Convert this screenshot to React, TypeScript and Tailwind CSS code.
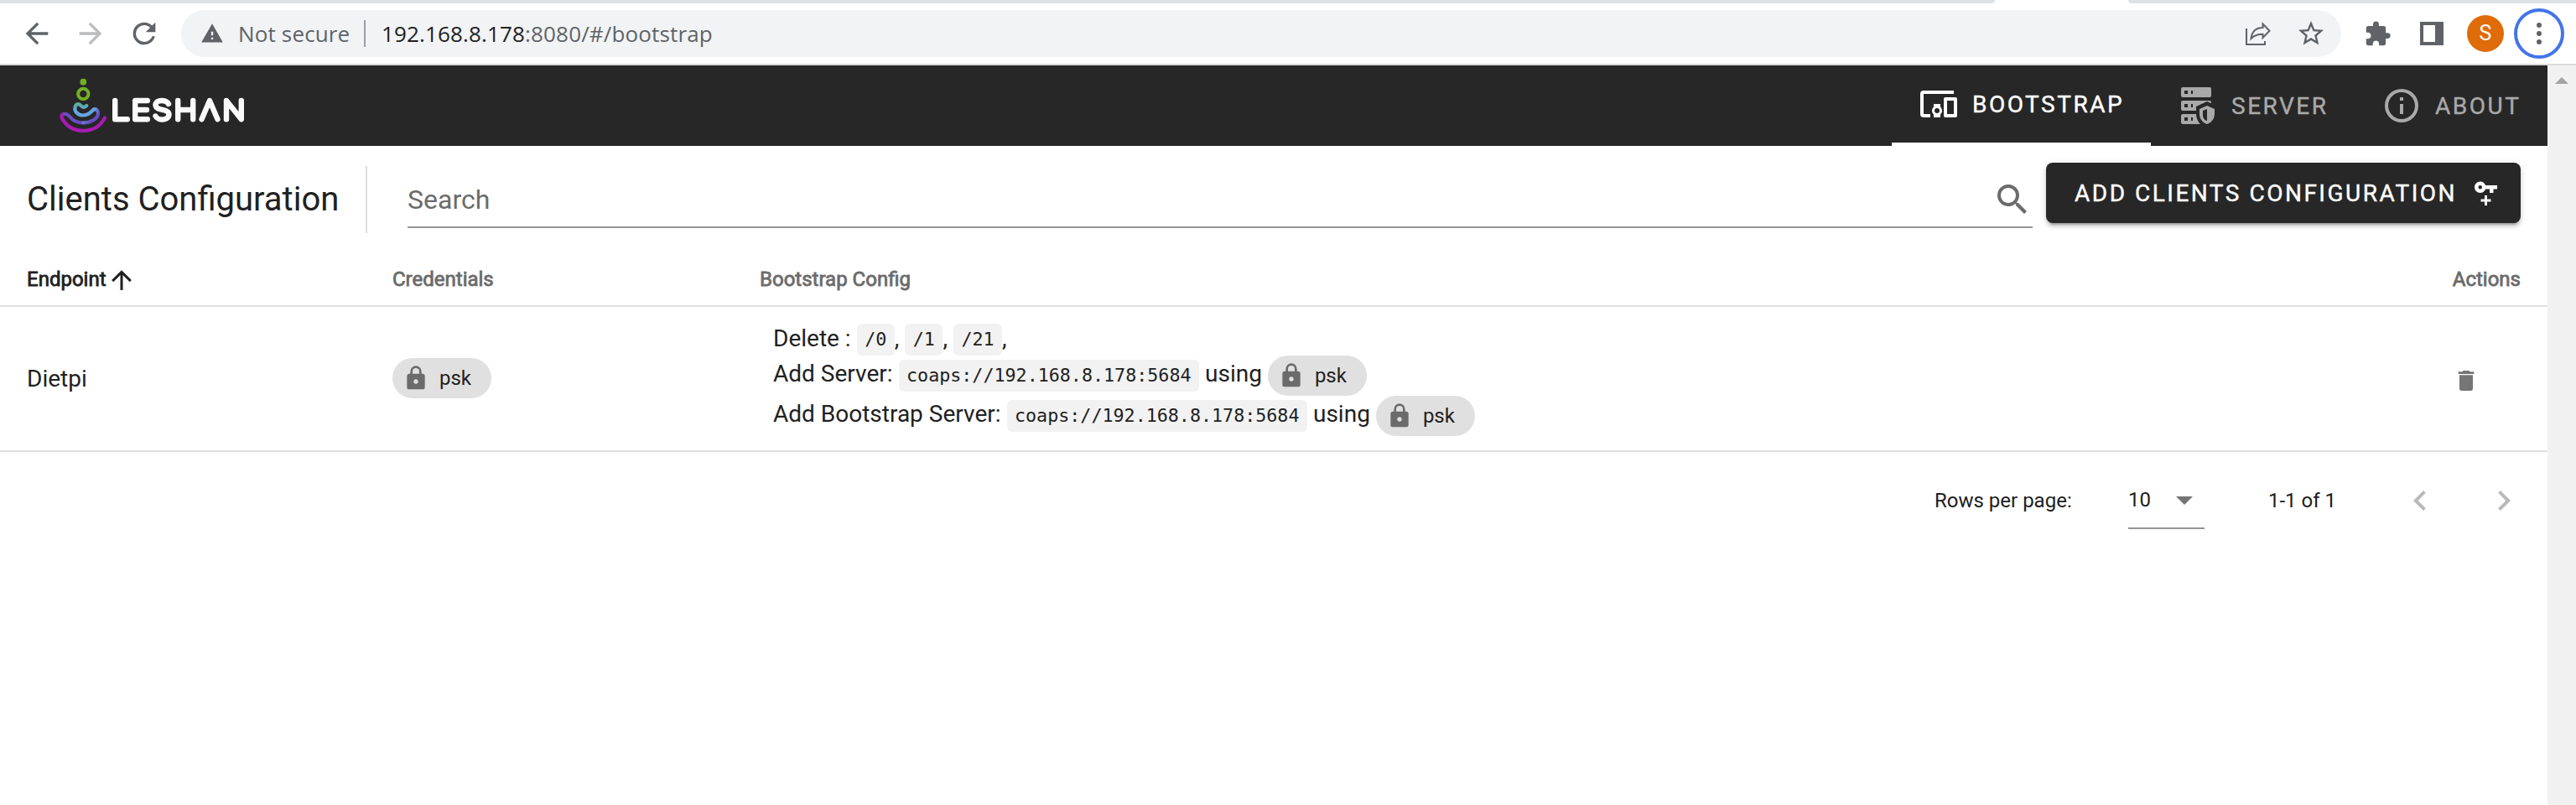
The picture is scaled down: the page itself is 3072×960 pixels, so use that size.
import React from "react";

const ICONS = {
  devices:
    "M3,6H21V4H3A2,2 0 0,0 1,6V18A2,2 0 0,0 3,20H7V18H3V6M13,12H9V13.78C8.39,14.33 8,15.11 8,16C8,16.89 8.39,17.67 9,18.22V20H13V18.22C13.61,17.67 14,16.88 14,16C14,15.12 13.61,14.33 13,13.78V12M11,17.5A1.5,1.5 0 0,1 9.5,16A1.5,1.5 0 0,1 11,14.5A1.5,1.5 0 0,1 12.5,16A1.5,1.5 0 0,1 11,17.5M22,8H16A1,1 0 0,0 15,9V19A1,1 0 0,0 16,20H22A1,1 0 0,0 23,19V9A1,1 0 0,0 22,8M21,18H17V10H21V18Z",
  server:
    "M3,1H19A1,1 0 0,1 20,2V6A1,1 0 0,1 19,7H3A1,1 0 0,1 2,6V2A1,1 0 0,1 3,1M3,9H19A1,1 0 0,1 20,10V10.67L17.5,9.56L11,12.44V15H3A1,1 0 0,1 2,14V10A1,1 0 0,1 3,9M3,17H11C11.06,19.25 12,21.4 13.46,23H3A1,1 0 0,1 2,22V18A1,1 0 0,1 3,17M8,5H9V3H8V5M8,13H9V11H8V13M8,21H9V19H8V21M4,3V5H6V3H4M4,11V13H6V11H4M4,19V21H6V19H4M17.5,12L22,14V17C22,19.78 20.08,22.37 17.5,23C14.92,22.37 13,19.78 13,17V14L17.5,12M17.5,13.94L15,15.06V17.72C15,19.26 16.07,20.7 17.5,21.06V13.94Z",
  info: "M11,9H13V7H11M12,20C7.59,20 4,16.41 4,12C4,7.59 7.59,4 12,4C16.41,4 20,7.59 20,12C20,16.41 16.41,20 12,20M12,2A10,10 0 0,0 2,12A10,10 0 0,0 12,22A10,10 0 0,0 22,12A10,10 0 0,0 12,2M11,17H13V11H11V17Z",
  magnify:
    "M9.5,3A6.5,6.5 0 0,1 16,9.5C16,11.11 15.41,12.59 14.44,13.73L14.71,14H15.5L20.5,19L19,20.5L14,15.5V14.71L13.73,14.44C12.59,15.41 11.11,16 9.5,16A6.5,6.5 0 0,1 3,9.5A6.5,6.5 0 0,1 9.5,3M9.5,5C7,5 5,7 5,9.5C5,12 7,14 9.5,14C12,14 14,12 14,9.5C14,7 12,5 9.5,5Z",
  lock: "M12,17A2,2 0 0,0 14,15C14,13.89 13.1,13 12,13A2,2 0 0,0 10,15A2,2 0 0,0 12,17M18,8A2,2 0 0,1 20,10V20A2,2 0 0,1 18,22H6A2,2 0 0,1 4,20V10C4,8.89 4.9,8 6,8H7V6A5,5 0 0,1 12,1A5,5 0 0,1 17,6V8H18M12,3A3,3 0 0,0 9,6V8H15V6A3,3 0 0,0 12,3Z",
  trash:
    "M19,4H15.5L14.5,3H9.5L8.5,4H5V6H19M6,19A2,2 0 0,0 8,21H16A2,2 0 0,0 18,19V7H6V19Z",
  arrowUp: "M13,20H11V8L5.5,13.5L4.08,12.08L12,4.16L19.92,12.08L18.5,13.5L13,8V20Z",
  chevronLeft: "M15.41,16.58L10.83,12L15.41,7.41L14,6L8,12L14,18L15.41,16.58Z",
  chevronRight: "M8.59,16.58L13.17,12L8.59,7.41L10,6L16,12L10,18L8.59,16.58Z",
  menuDown: "M7,10L12,15L17,10H7Z",
  keyPlus:
    "M6.5,3C8.46,3 10.13,4.25 10.74,6H20V9H17V12H14V9H10.74C10.13,10.75 8.46,12 6.5,12C4,12 2,10 2,7.5C2,5 4,3 6.5,3M6.5,6A1.5,1.5 0 0,0 5,7.5A1.5,1.5 0 0,0 6.5,9A1.5,1.5 0 0,0 8,7.5A1.5,1.5 0 0,0 6.5,6M10,14H12V17H15V19H12V22H10V19H7V17H10V14Z",
  back: "M20,11H7.83L13.42,5.41L12,4L4,12L12,20L13.41,18.59L7.83,13H20V11Z",
  forward: "M4,11H16.17L10.58,5.41L12,4L20,12L12,20L10.59,18.59L16.17,13H4V11Z",
  reload:
    "M17.65,6.35C16.2,4.9 14.21,4 12,4A8,8 0 0,0 4,12A8,8 0 0,0 12,20C15.73,20 18.84,17.45 19.73,14H17.65C16.83,16.33 14.61,18 12,18A6,6 0 0,1 6,12A6,6 0 0,1 12,6C13.66,6 15.14,6.69 16.22,7.78L13,11H20V4L17.65,6.35Z",
  warning: "M1,21H23L12,2L1,21ZM13,18H11V16H13V18ZM13,14H11V10H13V14Z",
  star: "M22,9.24L14.81,8.62L12,2L9.19,8.63L2,9.24L7.46,13.97L5.82,21L12,17.27L18.18,21L16.55,13.97L22,9.24ZM12,15.4L8.24,17.67L9.24,13.39L5.92,10.51L10.3,10.13L12,6.1L13.71,10.14L18.09,10.52L14.77,13.4L15.77,17.68L12,15.4Z",
  puzzle:
    "M20.5,11H19V7A2,2 0 0,0 17,5H13V3.5A2.5,2.5 0 0,0 8,3.5V5H4A2,2 0 0,0 2,7V10.8H3.5C5,10.8 6.2,12 6.2,13.5C6.2,15 5,16.2 3.5,16.2H2V20A2,2 0 0,0 4,22H7.8V20.5C7.8,19 9,17.8 10.5,17.8C12,17.8 13.2,19 13.2,20.5V22H17A2,2 0 0,0 19,20V16H20.5A2.5,2.5 0 0,0 20.5,11Z",
};

function Icon({ name, className }: { name: keyof typeof ICONS; className: string }) {
  return (
    <svg viewBox="0 0 24 24" fill="currentColor" fillRule="evenodd" className={`shrink-0 ${className}`}>
      <path d={ICONS[name]} />
    </svg>
  );
}

function BrowserBar() {
  return (
    <div className="h-[78px] border-b-2 border-[#dadbdc] bg-white">
      <div className="flex h-1 justify-between">
        <div className="w-[2379px] rounded-br-[8px] bg-[#dee1e6]" />
        <div className="w-[534px] rounded-bl-[8px] bg-[#dee1e6]" />
      </div>
      <div className="flex h-[72px] items-center text-[#5f6368]">
        <Icon name="back" className="ml-6 size-10" />
        <Icon name="forward" className="ml-6 size-10 text-[#babcbe]" />
        <Icon name="reload" className="ml-6 size-10" />
        <div className="ml-6 flex h-14 w-[2576px] items-center rounded-full bg-[#f1f3f4] font-['Open_Sans',sans-serif] text-[26px] tracking-[0.15px]">
          <Icon name="warning" className="ml-[23px] size-7" />
          <span className="ml-[17px] w-[134px] whitespace-nowrap">Not secure</span>
          <span className="ml-4 h-8 w-[2px] bg-[#9aa0a6]" />
          <span className="ml-[19px] whitespace-nowrap">
            <span className="text-[#202124]">192.168.8.178</span>:8080/#/bootstrap
          </span>
          <svg viewBox="0 0 32 32" className="mr-[30px] ml-auto size-8" fill="none" stroke="currentColor" strokeWidth="2">
            <path d="M3 10V29H25V25" />
            <path d="M8.500 22C9.500 14 14 9 22.500 9V4.500L30.500 12.800L22.500 21V16.800C16 16.800 12 18.500 8.500 22Z" />
          </svg>
          <Icon name="star" className="mr-[18px] size-9" />
        </div>
        <Icon name="puzzle" className="ml-[27px] size-[33px]" />
        <svg viewBox="0 0 28 28" className="ml-[34px] size-7" fill="currentColor" fillRule="evenodd">
          <path d="M0 0H28V28H0ZM4 4V24H18V4Z" />
        </svg>
        <div className="ml-7 flex size-11 items-center justify-center rounded-full bg-[#df6b0a] font-['Roboto',sans-serif] text-[25px] text-white">S</div>
        <div className="ml-3 flex size-[60px] flex-col items-center justify-center gap-1 rounded-full border-4 border-[#4374e8]">
          <span className="size-1.5 rounded-full bg-[#5f6368]" />
          <span className="size-1.5 rounded-full bg-[#5f6368]" />
          <span className="size-1.5 rounded-full bg-[#5f6368]" />
        </div>
      </div>
    </div>
  );
}

function Logo() {
  return (
    <svg viewBox="0 0 222 66" className="ml-[71px] h-[66px] w-[222px]" fill="none" strokeLinecap="round" strokeLinejoin="round">
      <defs>
        <linearGradient id="shoulders" x1="0" y1="30" x2="0" y2="38" gradientUnits="userSpaceOnUse">
          <stop offset="0" stopColor="#56b08a" />
          <stop offset="1" stopColor="#66a4e2" />
        </linearGradient>
        <linearGradient id="arms" x1="38" y1="37" x2="45" y2="45" gradientUnits="userSpaceOnUse">
          <stop offset="0" stopColor="#66a4e2" />
          <stop offset="1" stopColor="#6a4cc4" />
        </linearGradient>
      </defs>
      <circle cx="28.300" cy="4.700" r="3.900" fill="#73b024" />
      <circle cx="28.300" cy="19" r="6.200" stroke="#73b024" strokeWidth="4" />
      <g strokeWidth="4.200">
        <path d="M5 43C2.500 43 2 46 3 48C8 57.500 17 62.800 28.300 62.800C40 62.800 49 57 54 47.500" stroke="#a81cb2" />
        <path d="M6 43C9 42 10 44 12 46C16 51 22 53.500 28.300 53.500" stroke="#6a4cc4" />
        <path d="M28.300 53.500C37 53.500 46 48.500 46 42.500C46 38 43 36.500 41 37.500" stroke="url(#arms)" />
        <path d="M41 37.500C38 39 36 44.500 28.300 44.500C21 44.500 17.500 39 18.500 35C19.500 31 22.500 30 25 32.500C28 35.500 29 35.500 32.300 33" stroke="url(#shoulders)" />
      </g>
      <path
        d="M66.200 27V49.200H80.800M104.800 27H90.200V49.200H104.800M90.200 38H104M130 31C127.500 26 115 25 114.500 32C114.500 40 130.500 36 130.500 43.500C130 51.500 117 51 114.500 45.500M141.200 27V49.200M159.200 27V49.200M141.200 38H159.200M169.500 49.200L179 27L188.500 49.200M199 49.200V27L216.800 49.200V27"
        stroke="#fafafa"
        strokeWidth="6.400"
      />
    </svg>
  );
}

function NavBar() {
  return (
    <div className="flex h-24 items-stretch bg-[#272727] text-[28px] tracking-[2.5px] text-[#a9a9a9] [-webkit-text-stroke:0.4px]">
      <div className="flex items-center">
        <Logo />
      </div>
      <div className="ml-auto flex w-[309px] items-center border-b-4 border-white pl-8 text-white">
        <Icon name="devices" className="size-12" />
        <span className="mt-px ml-4">BOOTSTRAP</span>
      </div>
      <div className="flex w-[243px] items-center pl-8">
        <Icon name="server" className="size-12" />
        <span className="mt-px ml-4">SERVER</span>
      </div>
      <div className="flex w-[230px] items-center pl-8">
        <Icon name="info" className="size-12" />
        <span className="mt-px ml-4">ABOUT</span>
      </div>
    </div>
  );
}

function Toolbar() {
  return (
    <div className="flex h-32 items-center px-8">
      <h1 className="w-[404px] text-[40px] whitespace-nowrap">Clients Configuration</h1>
      <div className="h-20 w-0.5 bg-[#dedede]" />
      <div className="mt-0.5 ml-12 flex h-[66px] w-[1938px] items-center border-b-2 border-[#949494] text-[32px] text-[#6b6b6b]">
        <span>Search</span>
        <Icon name="magnify" className="ml-auto size-12" />
      </div>
      <button className="mb-4 ml-4 flex h-[72px] w-[566px] items-center rounded-lg bg-[#272727] pr-[22px] pl-[34px] text-[28px] tracking-[2.5px] text-white shadow-[0_6px_2px_-4px_rgba(0,0,0,0.2),0_4px_4px_0_rgba(0,0,0,0.14),0_2px_10px_0_rgba(0,0,0,0.12)] [-webkit-text-stroke:0.4px]">
        <span className="mt-px whitespace-nowrap">ADD CLIENTS CONFIGURATION</span>
        <Icon name="keyPlus" className="ml-auto size-9" />
      </button>
    </div>
  );
}

function PskChip() {
  return (
    <span className="flex h-12 w-[118px] shrink-0 items-center rounded-full bg-[#e0e0e0] pl-3 text-[24px]">
      <Icon name="lock" className="size-8 text-[#6b6b6b]" />
      <span className="ml-3">psk</span>
    </span>
  );
}

function Code({ children }: { children: React.ReactNode }) {
  return (
    <code className="flex h-[38px] items-center rounded-md bg-[#f2f2f2] px-[9.5px] pt-0.5 font-['DejaVu_Sans_Mono',monospace] text-[21.7px] whitespace-nowrap">
      {children}
    </code>
  );
}

function ServerLine({ label }: { label: string }) {
  return (
    <div className="flex h-12 items-center">
      <span className="mr-[7px] mb-1">{label}</span>
      <Code>coaps://192.168.8.178:5684</Code>
      <span className="mx-[7px] mb-1">using</span>
      <PskChip />
    </div>
  );
}

function ConfigTable() {
  return (
    <div>
      <div className="flex h-16 items-center border-b-2 border-[#e0e0e0] px-8 text-[24px] text-[#6b6b6b] [-webkit-text-stroke:0.8px]">
        <div className="flex w-[436px] items-center text-[#212121]">
          Endpoint
          <Icon name="arrowUp" className="mt-0.5 size-9" />
        </div>
        <div className="w-[438px]">Credentials</div>
        <div>Bootstrap Config</div>
        <div className="ml-auto">Actions</div>
      </div>
      <div className="flex h-[173px] items-center border-b-2 border-[#e0e0e0] px-8 text-[28px]">
        <div className="w-[436px]">Dietpi</div>
        <div className="mb-px w-[454px]">
          <PskChip />
        </div>
        <div className="mt-0.5">
          <div className="flex h-[38px] items-center">
            <span className="mr-[7px] mb-0.5">Delete :</span>
            <Code>/0</Code>
            <span className="mr-[7px] mb-0.5">,</span>
            <Code>/1</Code>
            <span className="mr-[7px] mb-0.5">,</span>
            <Code>/21</Code>
            <span className="mb-0.5">,</span>
          </div>
          <ServerLine label="Add Server:" />
          <ServerLine label="Add Bootstrap Server:" />
        </div>
        <Icon name="trash" className="mt-[5px] mr-[49px] ml-auto size-8 text-[#757575]" />
      </div>
      <div className="flex h-[116px] items-center text-[24px]">
        <span className="ml-auto w-[231px]">Rows per page:</span>
        <div className="flex h-[68px] w-[91px] items-center border-b-2 border-[#949494]">
          <span>10</span>
          <Icon name="menuDown" className="ml-4 size-12 text-[#757575]" />
        </div>
        <span className="ml-[76px] w-[157px]">1-1 of 1</span>
        <Icon name="chevronLeft" className="size-12 text-[#b9b9b9]" />
        <Icon name="chevronRight" className="mr-[28px] ml-[52px] size-12 text-[#b9b9b9]" />
      </div>
    </div>
  );
}

export default function App() {
  return (
    <div className="flex h-[960px] w-[3072px] flex-col overflow-hidden bg-white font-['Roboto',sans-serif] text-[#212121]">
      <BrowserBar />
      <div className="flex grow">
        <main className="w-[3038px]">
          <NavBar />
          <Toolbar />
          <ConfigTable />
        </main>
        <div className="flex w-[34px] justify-center bg-[#f1f1f1] pt-3.5">
          <svg viewBox="0 0 16 8" className="h-2 w-4" fill="#a3a3a3">
            <path d="M8 0L16 8H0Z" />
          </svg>
        </div>
      </div>
    </div>
  );
}
